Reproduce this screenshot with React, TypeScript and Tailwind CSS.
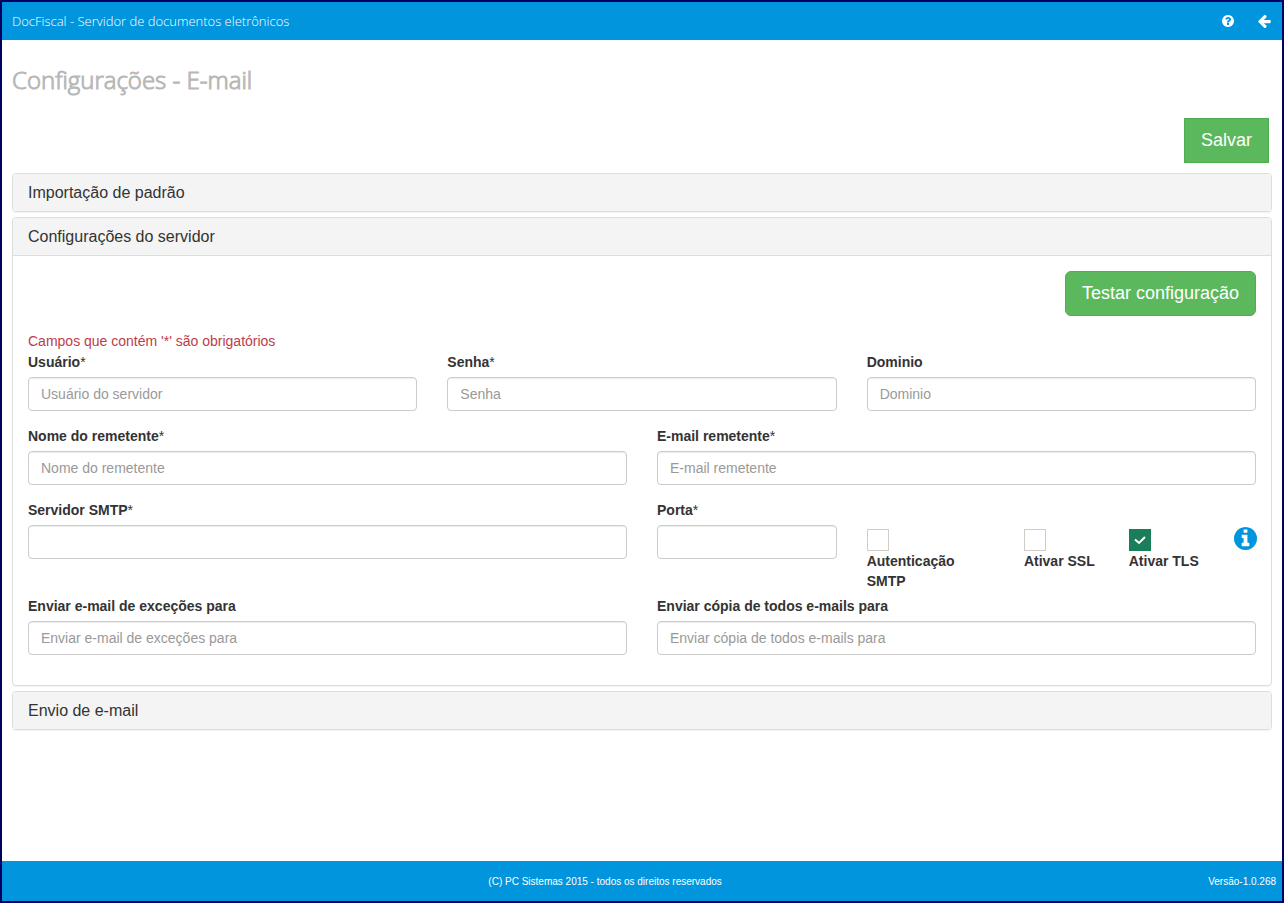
import { useId, useState } from 'react'
import type { ReactNode } from 'react'

function QuestionIcon() {
  return (
    <svg viewBox="0 128 1536 1536" className="size-3 fill-current" aria-hidden="true">
      <path d="M896 1376v-192q0-14-9-23t-23-9h-192q-14 0-23 9t-9 23v192q0 14 9 23t23 9h192q14 0 23-9t9-23zm256-672q0-88-55.5-163t-138.5-116-170-41q-243 0-371 213-15 24 8 42l132 100q7 6 19 6 16 0 25-12 53-68 86-92 34-24 86-24 48 0 85.5 26t37.5 59q0 38-20 61t-68 45q-63 28-115.5 86.5t-52.5 125.5v36q0 14 9 23t23 9h192q14 0 23-9t9-23q0-19 21.5-49.5t54.5-49.5q32-18 49-28.5t46-35 44.5-48 28-60.5 12.5-81zm384 192q0 209-103 385.5t-279.5 279.5-385.5 103-385.5-103-279.5-279.5-103-385.5 103-385.5 279.5-279.5 385.5-103 385.5 103 279.5 279.5 103 385.5z" />
    </svg>
  )
}

function ArrowLeftIcon() {
  return (
    <svg viewBox="64 192 1472 1536" className="size-[13px] fill-current" aria-hidden="true">
      <path d="M1536 896v128q0 53-32.5 90.5t-84.5 37.5h-704l293 294q38 36 38 90t-38 90l-75 76q-37 37-90 37-52 0-91-37l-651-652q-37-37-37-90 0-52 37-91l651-650q38-38 91-38 52 0 90 38l75 74q38 38 38 91t-38 91l-293 293h704q52 0 84.5 37.5t32.5 90.5z" />
    </svg>
  )
}

function InfoIcon() {
  return (
    <svg viewBox="0 128 1536 1536" className="size-[23px] fill-current" aria-hidden="true">
      <path d="M1024 1376v-160q0-14-9-23t-23-9h-96v-512q0-14-9-23t-23-9h-320q-14 0-23 9t-9 23v160q0 14 9 23t23 9h96v320h-96q-14 0-23 9t-9 23v160q0 14 9 23t23 9h448q14 0 23-9t9-23zm-128-896v-160q0-14-9-23t-23-9h-192q-14 0-23 9t-9 23v160q0 14 9 23t23 9h192q14 0 23-9t9-23zm640 416q0 209-103 385.5t-279.5 279.5-385.5 103-385.5-103-279.5-279.5-103-385.5 103-385.5 279.5-279.5 385.5-103 385.5 103 279.5 279.5 103 385.5z" />
    </svg>
  )
}

interface FieldProps {
  label: string
  required?: boolean
  placeholder?: string
  type?: string
  className: string
}

function Field({ label, required, placeholder, type = 'text', className }: FieldProps) {
  const id = useId()
  return (
    <div className={`mb-[15px] ${className}`}>
      <label htmlFor={id} className="mb-[5px] block text-sm/5 font-bold">
        {label}
        {required && <span className="font-normal">*</span>}
      </label>
      <input
        id={id}
        type={type}
        placeholder={placeholder}
        className="block h-[34px] w-full rounded border border-[#cccccc] bg-white px-3 text-sm text-[#555555] shadow-[inset_0_1px_1px_rgba(0,0,0,0.075)] placeholder:text-[#999999]"
      />
    </div>
  )
}

function Check({ label, defaultChecked = false }: { label: string; defaultChecked?: boolean }) {
  const id = useId()
  const [checked, setChecked] = useState(defaultChecked)
  return (
    <div className="pt-[29px] pr-[30px] pb-[5px]">
      <div className="grid size-[22px]">
        <input
          id={id}
          type="checkbox"
          checked={checked}
          onChange={(e) => setChecked(e.target.checked)}
          className="col-start-1 row-start-1 size-[22px] appearance-none border border-[#d0cdc7] bg-white checked:border-[#1b7e5a] checked:bg-[#1b7e5a]"
        />
        {checked && (
          <svg
            viewBox="0 0 22 22"
            className="pointer-events-none col-start-1 row-start-1 size-[22px] fill-none stroke-white stroke-2"
            aria-hidden="true"
          >
            <path d="M6 10.5l4 3.5 6-6" />
          </svg>
        )}
      </div>
      <label htmlFor={id} className="block text-sm/5 font-bold">
        {label}
      </label>
    </div>
  )
}

function Panel({ title, children }: { title: string; children?: ReactNode }) {
  const [open, setOpen] = useState(Boolean(children))
  return (
    <section className="rounded border border-[#dddddd] bg-white shadow-[0_1px_1px_rgba(0,0,0,0.05)]">
      <h2>
        <button
          type="button"
          aria-expanded={open}
          onClick={() => setOpen(!open)}
          className="block h-[37px] w-full rounded-t-[3px] bg-[#f4f4f4] px-[15px] text-left text-base"
        >
          {title}
        </button>
      </h2>
      {open && children && <div className="border-t border-[#dddddd] p-[15px]">{children}</div>}
    </section>
  )
}

export default function App() {
  return (
    <div className="flex min-h-screen flex-col border-2 border-[#000060] bg-white font-['Liberation_Sans',Arial,sans-serif] text-[#333333]">
      <header className="flex h-[38px] items-center justify-between bg-[#0095dd] pr-[11px] pl-[10px] text-white">
        <a href="#" className="pt-0.5 font-['Open_Sans',sans-serif] text-[13px] font-light">
          DocFiscal - Servidor de documentos eletrônicos
        </a>
        <nav className="flex items-center gap-6">
          <a href="#ajuda" aria-label="Ajuda">
            <QuestionIcon />
          </a>
          <a href="#voltar" aria-label="Voltar">
            <ArrowLeftIcon />
          </a>
        </nav>
      </header>

      <main className="flex-1 px-[10px] pt-6">
        <h1 className="font-['Open_Sans',sans-serif] text-2xl/8 font-light text-[#b8b8b8] [-webkit-text-stroke:1px]">
          Configurações - E-mail
        </h1>

        <div className="mt-[22px] mb-[10px] flex justify-end pr-[3px]">
          <button
            type="button"
            className="h-[45px] border border-[#4cae4c] bg-[#5cb85c] px-4 pb-0.5 text-lg text-white"
          >
            Salvar
          </button>
        </div>

        <div className="space-y-[5px]">
          <Panel title="Importação de padrão" />

          <Panel title="Configurações do servidor">
            <form>
              <div className="flex justify-end">
                <button
                  type="button"
                  className="h-[45px] rounded-md border border-[#4cae4c] bg-[#5cb85c] px-4 pb-0.5 text-lg text-white"
                >
                  Testar configuração
                </button>
              </div>

              <p className="mt-[15px] mb-px text-sm/5 text-[#bd3c4a]">
                Campos que contém '*' são obrigatórios
              </p>

              <div className="grid grid-cols-12 gap-x-[30px]">
                <Field className="col-span-4" label="Usuário" required placeholder="Usuário do servidor" />
                <Field className="col-span-4" label="Senha" required type="password" placeholder="Senha" />
                <Field className="col-span-4" label="Dominio" placeholder="Dominio" />

                <Field className="col-span-6" label="Nome do remetente" required placeholder="Nome do remetente" />
                <Field className="col-span-6" label="E-mail remetente" required type="email" placeholder="E-mail remetente" />

                <Field className="col-span-6" label="Servidor SMTP" required />
                <Field className="col-span-2" label="Porta" required />
                <div className="col-span-4 -mr-[30px] grid grid-cols-[3fr_2fr_2fr_1fr]">
                  <Check label="Autenticação SMTP" />
                  <Check label="Ativar SSL" />
                  <Check label="Ativar TLS" defaultChecked />
                  <a href="#info" aria-label="Informações" className="pt-[27px] text-[#0095dd]">
                    <InfoIcon />
                  </a>
                </div>

                <Field className="col-span-6" label="Enviar e-mail de exceções para" placeholder="Enviar e-mail de exceções para" />
                <Field className="col-span-6" label="Enviar cópia de todos e-mails para" placeholder="Enviar cópia de todos e-mails para" />
              </div>
            </form>
          </Panel>

          <Panel title="Envio de e-mail" />
        </div>
      </main>

      <footer className="flex h-10 items-center bg-[#0095dd] pr-[6px] text-[10px] text-white">
        <p className="flex-1 text-center">(C) PC Sistemas 2015 - todos os direitos reservados</p>
        <p>Versão-1.0.268</p>
      </footer>
    </div>
  )
}
